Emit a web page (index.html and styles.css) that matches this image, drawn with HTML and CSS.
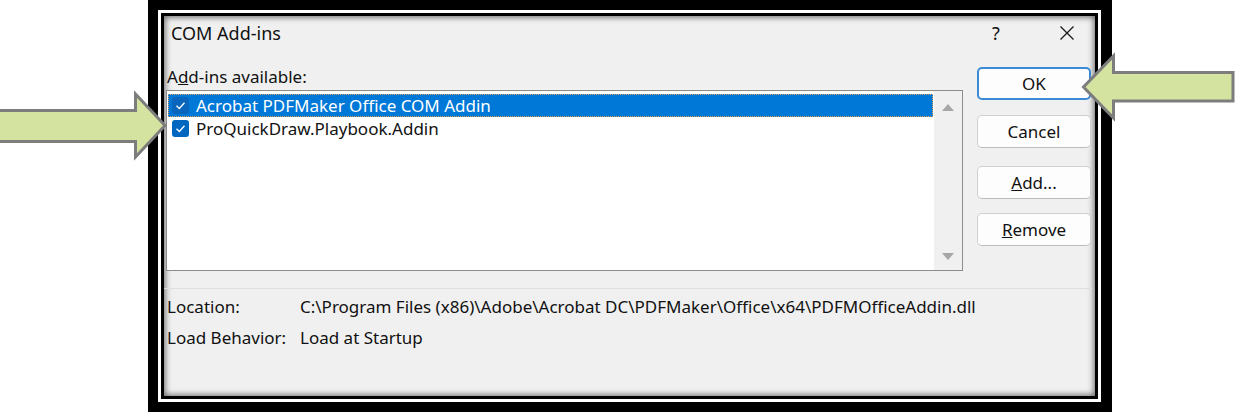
FILE: index.html
```html
<!DOCTYPE html>
<html>
<head>
<meta charset="utf-8">
<link rel="stylesheet" href="styles.css">
</head>
<body>
<div class="frame">
  <div class="inner">
    <div class="dialog">
      <div class="titlebar">
        <span class="title">COM Add-ins</span>
        <span class="help">?</span>
        <span class="close"><svg width="16" height="16" viewBox="0 0 16 16"><path d="M1.5 1.5 L14.5 14.5 M14.5 1.5 L1.5 14.5" stroke="#1a1a1a" stroke-width="1.3" fill="none"/></svg></span>
      </div>
      <div class="main">
        <div class="left">
          <div class="label">A<u>d</u>d-ins available:</div>
          <div class="listbox">
            <div class="items">
              <div class="item selected">
                <span class="check"><svg width="17" height="17" viewBox="0 0 17 17"><path d="M4.5 8.8 L7.3 11.5 L12.5 5.8" stroke="#fff" stroke-width="1.3" fill="none"/></svg></span>
                <span class="name">Acrobat PDFMaker Office COM Addin</span>
              </div>
              <div class="item">
                <span class="check"><svg width="17" height="17" viewBox="0 0 17 17"><path d="M4.5 8.8 L7.3 11.5 L12.5 5.8" stroke="#fff" stroke-width="1.3" fill="none"/></svg></span>
                <span class="name">ProQuickDraw.Playbook.Addin</span>
              </div>
            </div>
            <div class="scrollbar">
              <span class="tri up"></span>
              <span class="tri down"></span>
            </div>
          </div>
        </div>
        <div class="buttons">
          <button class="btn default">OK</button>
          <button class="btn cancel">Cancel</button>
          <button class="btn add"><u>A</u>dd...</button>
          <button class="btn remove"><u>R</u>emove</button>
        </div>
      </div>
      <div class="sep"></div>
      <div class="details">
        <span class="key">Location:</span>
        <span class="val">C:\Program Files (x86)\Adobe\Acrobat DC\PDFMaker\Office\x64\PDFMOfficeAddin.dll</span>
        <span class="key">Load Behavior:</span>
        <span class="val">Load at Startup</span>
      </div>
    </div>
  </div>
</div>
<svg class="arrows" width="1236" height="412" viewBox="0 0 1236 412">
  <polygon points="-3,110.5 135.5,110.5 135.5,94 165,125.5 135.5,157 135.5,141.5 -3,141.5" fill="#d5e3a0" stroke="#7d7d7d" stroke-width="3" stroke-linejoin="miter"/>
  <polygon points="1233,72.5 1113.5,72.5 1113.5,56 1083.5,87 1113.5,118 1113.5,101 1233,101" fill="#d5e3a0" stroke="#7d7d7d" stroke-width="3" stroke-linejoin="miter"/>
</svg>
</body>
</html>
```

FILE: styles.css
```css
* { box-sizing: border-box; }
html, body {
  margin: 0;
  padding: 0;
  background: #fff;
  width: 1236px;
  height: 412px;
  overflow: hidden;
  position: relative;
  font-family: "Noto Sans", "Open Sans", sans-serif;
  color: #111;
}
.frame {
  margin-left: 148px;
  width: 964px;
  height: 412px;
  border: 10px solid #000;
  border-right-width: 11px;
  background: #fff;
  padding: 3px;
}
.inner {
  height: 100%;
  border: 3px solid #000;
}
.dialog {
  height: 100%;
  background: #f0f0f0;
  box-shadow: inset 0 0 6px 1px rgba(0,0,0,0.6);
  display: flex;
  flex-direction: column;
  font-size: 17px;
}
.titlebar {
  height: 33px;
  display: flex;
  align-items: center;
  padding-left: 7px;
  font-size: 18px;
}
.title { flex: 1; }
.help { width: 16px; margin-right: 55px; text-align: center; font-size: 18px; }
.close { width: 16px; margin-right: 20px; display: flex; }
.main {
  display: flex;
  align-items: flex-start;
}
.left {
  margin-left: 2px;
  width: 797px;
}
.label {
  margin-top: 18px;
  margin-left: 1px;
  line-height: 20px;
  height: 20px;
}
.listbox {
  margin-top: 3px;
  height: 181px;
  border: 1px solid #8c8c8c;
  background: #fff;
  display: flex;
}
.items {
  flex: 1;
  padding: 3px 1px 0 1px;
}
.item {
  height: 23px;
  display: flex;
  align-items: center;
  border: 1px solid transparent;
}
.item.selected {
  background: #0078d7;
  color: #fff;
  border: 1px dotted #d9a05a;
}
.check {
  width: 17px;
  height: 17px;
  margin-left: 3px;
  border-radius: 3px;
  background: #0067c0;
  display: flex;
}
.item.selected .check { background: #0a66bd; }
.name { margin-left: 7px; line-height: 22px; }
.scrollbar {
  width: 28px;
  background: #f0f0f0;
  position: relative;
  display: flex;
  flex-direction: column;
  justify-content: space-between;
  align-items: center;
  padding: 13px 0 10px 0;
}
.tri {
  width: 0;
  height: 0;
  border-left: 6px solid transparent;
  border-right: 6px solid transparent;
}
.tri.up { border-bottom: 7px solid #a6a6a6; }
.tri.down { border-top: 7px solid #a6a6a6; }
.buttons {
  margin-left: 14px;
  width: 114px;
  display: flex;
  flex-direction: column;
}
.btn {
  font: inherit;
  font-size: 17px;
  color: #111;
  height: 33px;
  background: #fdfdfd;
  border: 1px solid #d0d0d0;
  border-bottom-color: #bdbdbd;
  border-radius: 5px;
  padding: 0;
}
.btn.default {
  margin-top: 18px;
  border: 2px solid #3b8ad6;
}
.btn.cancel { margin-top: 15px; }
.btn.add { margin-top: 18px; }
.btn.remove { margin-top: 14px; }
.sep {
  margin-top: 17px;
  height: 1px;
  background: #dedede;
  margin-right: 3px;
}
.details {
  display: grid;
  grid-template-columns: 133px auto;
  row-gap: 9px;
  padding-left: 3px;
  margin-top: 7px;
  line-height: 22px;
}
.arrows {
  position: absolute;
  left: 0;
  top: 0;
  pointer-events: none;
}
```
